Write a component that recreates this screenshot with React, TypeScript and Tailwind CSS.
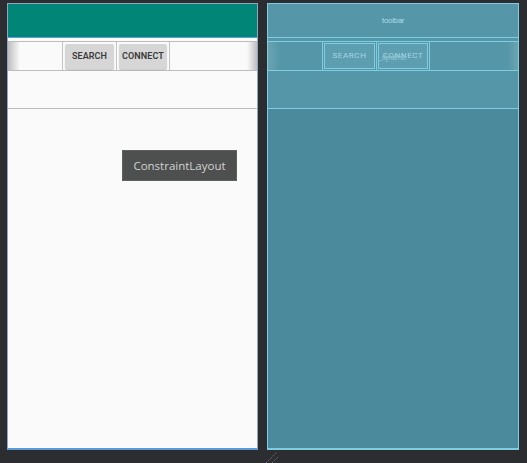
import React from 'react';

function DesignPanel() {
  return (
    <div className="relative w-[251px] h-[447px] bg-[#fafafa] border border-[#8ea6bf] border-b-2 border-b-[#5b9bd5] flex flex-col">
      <div className="h-[33px] bg-[#018577] shrink-0" />
      <div className="h-px bg-[#5b9bd5] shrink-0" />
      <div className="h-[3px] shrink-0" />
      <div className="relative h-[30px] shrink-0 border-y border-[#bdbdbd] flex">
        <div className="absolute left-0 top-0 bottom-0 w-[12px] bg-gradient-to-r from-[#bdbdbd] to-transparent" />
        <div className="absolute right-0 top-0 bottom-0 w-[10px] bg-gradient-to-l from-[#bdbdbd] to-transparent" />
        <div className="w-[54px] shrink-0" />
        <div className="w-[54px] shrink-0 border-l border-[#c4c4c4] px-[2px] pt-[2px] pb-[1px]">
          <div className="h-full bg-[#d6d6d6] rounded-[2px] shadow-[0_1px_1px_rgba(0,0,0,0.2)] flex items-center justify-center text-[9px] font-semibold text-[#3a3a3a] tracking-[0.1px]">
            SEARCH
          </div>
        </div>
        <div className="w-[54px] shrink-0 border-l border-r border-[#c4c4c4] px-[2px] pt-[2px] pb-[1px]">
          <div className="h-full bg-[#d6d6d6] rounded-[2px] shadow-[0_1px_1px_rgba(0,0,0,0.2)] flex items-center justify-center text-[9px] font-semibold text-[#3a3a3a] tracking-[0.1px]">
            CONNECT
          </div>
        </div>
      </div>
      <div className="h-[38px] shrink-0 border-b border-[#bdbdbd]" />
      <div className="flex-1" />
    </div>
  );
}

function BlueprintPanel() {
  return (
    <div className="w-[252px] h-[447px] bg-[#4a8a9c] border border-[#7ecde0] border-b-2 border-b-dashed flex flex-col">
      <div className="h-[33px] bg-[#5597a8] shrink-0 flex items-center justify-center text-[8px] text-[#a6d7e3] tracking-[-0.4px]">
        toolbar
      </div>
      <div className="h-px bg-[#7ecde0] shrink-0" />
      <div className="h-[3px] bg-[#5597a8] shrink-0" />
      <div className="relative h-[30px] bg-[#5597a8] shrink-0 border-y border-[#7ecde0] flex">
        <div className="absolute left-0 top-0 bottom-0 w-[12px] bg-gradient-to-r from-[#6aa4b3] to-transparent" />
        <div className="absolute right-0 top-0 bottom-0 w-[10px] bg-gradient-to-l from-[#6aa4b3] to-transparent" />
        <div className="w-[54px] shrink-0" />
        <div className="w-[54px] shrink-0 border-l border-[#7ecde0] px-[1px] pt-[1px] pb-[1px]">
          <div className="h-full bg-[#5d9fb0] border border-[#7ecde0] flex items-center justify-center text-[8px] text-[#a6d7e3] tracking-[0.6px]">
            SEARCH
          </div>
        </div>
        <div className="relative w-[54px] shrink-0 border-l border-r border-[#7ecde0] px-[1px] pt-[1px] pb-[1px]">
          <div className="h-full bg-[#5d9fb0] border border-[#7ecde0] flex items-center justify-center text-[8px] text-[#a6d7e3] tracking-[0.6px]">
            CONNECT
          </div>
          <span className="absolute left-[2px] top-[11px] text-[7px] text-[#8fc7d5] tracking-[-0.3px]">_dynamic</span>
        </div>
      </div>
      <div className="h-[38px] bg-[#5597a8] shrink-0 border-b border-[#7ecde0]" />
      <div className="flex-1" />
    </div>
  );
}

export default function App() {
  return (
    <div
      className="relative w-[527px] h-[463px] bg-[#2b2d30] pt-[3px] pl-[7px] flex gap-[9px] overflow-hidden"
      style={{ fontFamily: 'Roboto, "Noto Sans", sans-serif' }}
    >
      <DesignPanel />
      <BlueprintPanel />
      <div
        className="absolute left-[122px] top-[150px] w-[115px] h-[31px] bg-[#4e504f] border border-[#5f615f] flex items-center justify-center text-[11.5px] text-[#d2d2d2]"
        style={{ fontFamily: '"Open Sans", "Noto Sans", sans-serif' }}
      >
        ConstraintLayout
      </div>
      <svg className="absolute left-[264px] top-[451px]" width="16" height="12" viewBox="0 0 16 12">
        <line x1="2" y1="12" x2="13" y2="1" stroke="#6b6e72" strokeWidth="1" strokeDasharray="1.5 1" />
        <line x1="8" y1="12" x2="14" y2="6" stroke="#6b6e72" strokeWidth="1" strokeDasharray="1.5 1" />
      </svg>
    </div>
  );
}
